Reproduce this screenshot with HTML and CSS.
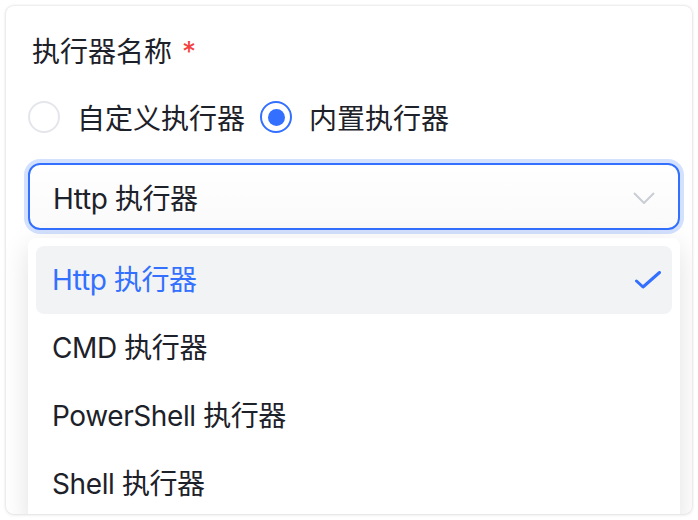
FILE: index.html
```html
<html>
    <head>
        <meta charset="UTF-8" />
        <link rel="stylesheet" href="styles.css">
    </head>
    <body>
        <div class="card">
            <div class="form_label">执行器名称 <span class="required">*</span></div>
            <div class="radio_group">
                <label class="radio">
                    <span class="radio_mark"></span>
                    <span class="radio_text">自定义执行器</span>
                </label>
                <label class="radio checked">
                    <span class="radio_mark"></span>
                    <span class="radio_text">内置执行器</span>
                </label>
            </div>
            <div class="select">
                <span class="select_value">Http 执行器</span>
                <svg class="select_arrow" width="22" height="12" viewBox="0 0 22 12">
                    <path d="M1 1 L11 11 L21 1" fill="none" stroke="#c9cdd4" stroke-width="2" />
                </svg>
            </div>
            <div class="dropdown">
                <div class="option selected">
                    <span>Http 执行器</span>
                    <svg class="option_check" width="26" height="18" viewBox="0 0 26 18">
                        <path d="M1.5 10 L8 16 L24.5 1.5" fill="none" stroke="#3370ff" stroke-width="3" stroke-linecap="round" stroke-linejoin="round" />
                    </svg>
                </div>
                <div class="option"><span>CMD 执行器</span></div>
                <div class="option"><span>PowerShell 执行器</span></div>
                <div class="option"><span>Shell 执行器</span></div>
            </div>
        </div>
    </body>
</html>
```

FILE: styles.css
```css
* {
    box-sizing: border-box;
}
body {
    margin: 0;
    padding: 6px;
    background: #fff;
    font-family: "Inter", "Noto Sans CJK SC", sans-serif;
    font-size: 28px;
    color: #1d2129;
}

.card {
    width: 686px;
    height: 508px;
    padding: 26px 12px 0 22px;
    border-radius: 8px;
    background: #fff;
    box-shadow: 0 0 3px rgba(0, 0, 0, 0.16), 0 1px 4px rgba(0, 0, 0, 0.06);
    overflow: hidden;
}

.form_label {
    height: 40px;
    line-height: 40px;
    padding-left: 4px;
    margin-bottom: 25px;
    color: #1d2129;
}

.required {
    color: #f53f3f;
    margin-left: 2px;
}

.radio_group {
    display: flex;
    align-items: center;
    gap: 15px;
    height: 40px;
    margin-bottom: 26px;
}

.radio {
    display: flex;
    align-items: center;
    gap: 17px;
}

.radio_mark {
    width: 32px;
    height: 32px;
    border: 2px solid #e5e6eb;
    border-radius: 50%;
    display: flex;
    align-items: center;
    justify-content: center;
}

.radio.checked .radio_mark {
    border-color: #3370ff;
}

.radio.checked .radio_mark::after {
    content: "";
    width: 17px;
    height: 17px;
    border-radius: 50%;
    background: #3370ff;
}

.select {
    height: 67px;
    display: flex;
    align-items: center;
    justify-content: space-between;
    padding: 0 23px 0 23px;
    border: 2px solid #3370ff;
    border-radius: 12px;
    background: linear-gradient(#fff, #fafafa);
    box-shadow: 0 0 0 4px #d3e1ff;
}

.select_value {
    letter-spacing: -0.4px;
}

.select_arrow {
    margin-top: 2px;
}

.dropdown {
    margin-top: 8px;
    padding: 8px;
    border-radius: 8px;
    background: #fff;
    box-shadow: 0 8px 28px rgba(0, 0, 0, 0.12);
}

.option {
    height: 68px;
    display: flex;
    align-items: center;
    justify-content: space-between;
    padding: 0 11px 4px 16px;
    border-radius: 8px;
    letter-spacing: -0.4px;
}

.option_check {
    margin-top: 4px;
}

.option.selected {
    background: #f2f3f5;
    color: #3370ff;
}
```
